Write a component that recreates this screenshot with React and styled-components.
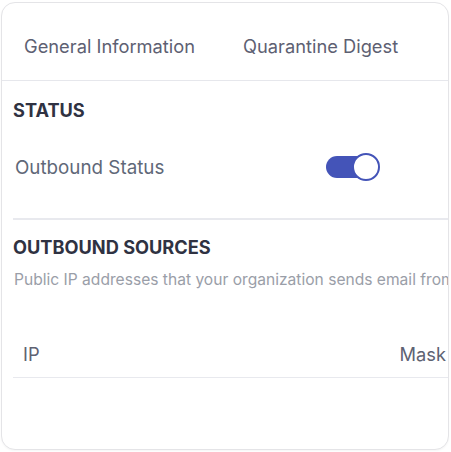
import { useState } from 'react';
import styled, { createGlobalStyle } from 'styled-components';

const GlobalStyle = createGlobalStyle`
  html, body {
    margin: 0;
    padding: 0;
    background: #ffffff;
  }
  body {
    font-family: Inter, 'Noto Sans', sans-serif;
  }
`;

const Page = styled.div`
  width: 451px;
  height: 452px;
  padding: 2px 2px 2px 1px;
  box-sizing: border-box;
`;

const Card = styled.div`
  height: 100%;
  box-sizing: border-box;
  border: 1.5px solid #e4e4e7;
  border-radius: 14px;
  background: #ffffff;
  overflow: hidden;
  box-shadow: 0 1px 2px rgba(0, 0, 0, 0.04);
`;

const Tabs = styled.div`
  display: flex;
  gap: 48px;
  height: 78px;
  padding: 9px 0 0 22px;
  align-items: center;
  box-sizing: border-box;
  border-bottom: 1.5px solid #e6e7ec;
`;

const Tab = styled.div`
  font-size: 18.3px;
  line-height: 24px;
  color: #5d6072;
  white-space: nowrap;
`;

const Body = styled.div`
  width: 480px;
  padding-left: 11px;
`;

const SectionTitle = styled.h3`
  margin: 0;
  font-size: 18.2px;
  font-weight: 700;
  color: #2f3242;
  line-height: 22px;
  padding-top: ${(p) => p.$top}px;
`;

const StatusRow = styled.div`
  display: flex;
  align-items: center;
  width: 370px;
  justify-content: space-between;
  margin: 32px 0 0 2px;
  height: 28px;
`;

const Label = styled.span`
  font-size: 18.8px;
  color: #5f6878;
`;

const Switch = styled.button`
  width: 52px;
  height: 22px;
  border-radius: 11px;
  border: none;
  padding: 0;
  margin-right: 7px;
  background: #4454b8;
  position: relative;
  cursor: pointer;

  &::after {
    content: '';
    position: absolute;
    top: -3px;
    left: ${(p) => (p.$on ? '26px' : '-2px')};
    width: 24px;
    height: 24px;
    border-radius: 50%;
    background: #ffffff;
    border: 2px solid #4454b8;
  }
`;

const Divider = styled.div`
  height: 1.5px;
  background: #e8e9ee;
  margin-top: ${(p) => p.$top}px;
`;

const Description = styled.p`
  margin: 12px 0 0 1px;
  font-size: 15.6px;
  line-height: 20px;
  color: #9a9ea8;
  white-space: nowrap;
`;

const TableHead = styled.div`
  display: grid;
  grid-template-columns: 1fr auto;
  width: 433px;
  margin-top: 41px;
  height: 46px;
  padding-left: 10px;
  box-sizing: border-box;
  align-items: center;
  font-size: 18.3px;
  color: #5e6272;
`;

const Cell = styled.span``;

export default function App() {
  const [on, setOn] = useState(true);

  return (
    <>
      <GlobalStyle />
      <Page>
        <Card>
          <Tabs>
            <Tab>General Information</Tab>
            <Tab>Quarantine Digest</Tab>
          </Tabs>
          <Body>
            <SectionTitle $top={18}>STATUS</SectionTitle>
            <StatusRow>
              <Label>Outbound Status</Label>
              <Switch $on={on} onClick={() => setOn(!on)} aria-label="Outbound Status" />
            </StatusRow>
            <Divider $top={37} />
            <SectionTitle $top={16}>OUTBOUND SOURCES</SectionTitle>
            <Description>Public IP addresses that your organization sends email from</Description>
            <TableHead>
              <Cell>IP</Cell>
              <Cell>Mask</Cell>
            </TableHead>
            <Divider $top={0} />
          </Body>
        </Card>
      </Page>
    </>
  );
}
